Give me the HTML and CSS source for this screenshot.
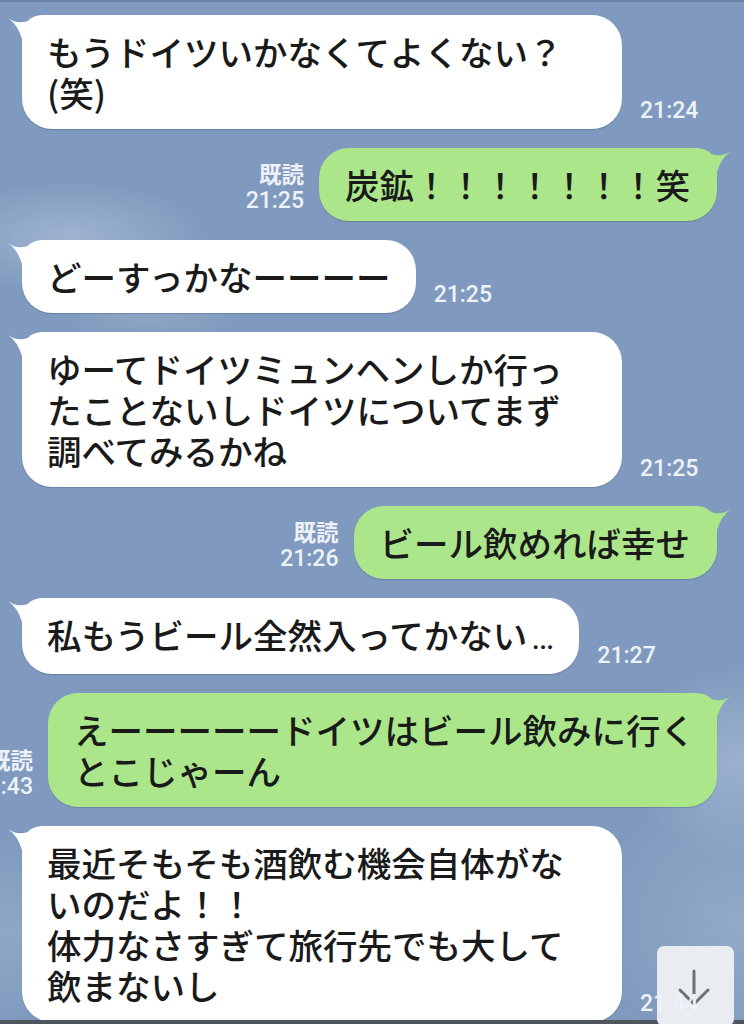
FILE: index.html
```html
<!DOCTYPE html>
<html lang="ja">
<head>
<meta charset="utf-8">
<title>LINE</title>
<link rel="stylesheet" href="styles.css">
</head>
<body>
<div class="screen">
  <div class="chat">
    <div class="row in">
      <div class="bubble white full">もうドイツいかなくてよくない？<br>(笑)<svg class="tail" viewBox="-14 0 28 24"><path d="M-14 3Q-2 12 14 2L14 24L0 24Q-4 10-14 3Z"/></svg></div>
      <span class="time">21:24</span>
    </div>
    <div class="row out">
      <div class="meta"><span class="read">既読</span><span class="time">21:25</span></div>
      <div class="bubble green">炭鉱！！！！！！！笑<svg class="tail" viewBox="-14 0 28 24"><path d="M-14 3Q-2 12 14 2L14 24L0 24Q-4 10-14 3Z"/></svg></div>
    </div>
    <div class="row in">
      <div class="bubble white">どーすっかなーーーー<svg class="tail" viewBox="-14 0 28 24"><path d="M-14 3Q-2 12 14 2L14 24L0 24Q-4 10-14 3Z"/></svg></div>
      <span class="time">21:25</span>
    </div>
    <div class="row in">
      <div class="bubble white full">ゆーてドイツミュンヘンしか行っ<br>たことないしドイツについてまず<br>調べてみるかね<svg class="tail" viewBox="-14 0 28 24"><path d="M-14 3Q-2 12 14 2L14 24L0 24Q-4 10-14 3Z"/></svg></div>
      <span class="time">21:25</span>
    </div>
    <div class="row out">
      <div class="meta"><span class="read">既読</span><span class="time">21:26</span></div>
      <div class="bubble green">ビール飲めれば幸せ<svg class="tail" viewBox="-14 0 28 24"><path d="M-14 3Q-2 12 14 2L14 24L0 24Q-4 10-14 3Z"/></svg></div>
    </div>
    <div class="row in">
      <div class="bubble white">私もうビール全然入ってかない<span class="ell">…</span><svg class="tail" viewBox="-14 0 28 24"><path d="M-14 3Q-2 12 14 2L14 24L0 24Q-4 10-14 3Z"/></svg></div>
      <span class="time">21:27</span>
    </div>
    <div class="row out">
      <div class="meta"><span class="read">既読</span><span class="time">21:43</span></div>
      <div class="bubble green wide">えーーーーードイツはビール飲みに行く<br>とこじゃーん<svg class="tail" viewBox="-14 0 28 24"><path d="M-14 3Q-2 12 14 2L14 24L0 24Q-4 10-14 3Z"/></svg></div>
    </div>
    <div class="row in">
      <div class="bubble white full">最近そもそも酒飲む機会自体がな<br>いのだよ！！<br>体力なさすぎて旅行先でも大して<br>飲まないし<svg class="tail" viewBox="-14 0 28 24"><path d="M-14 3Q-2 12 14 2L14 24L0 24Q-4 10-14 3Z"/></svg></div>
      <span class="time top">21:44</span>
    </div>
  </div>
  <div class="scroll-btn">
    <svg viewBox="0 0 77 80" width="77" height="80"><path d="M37 25V58M23 44L37 58L51 44" fill="none" stroke="#6e7076" stroke-width="3" stroke-linecap="round" stroke-linejoin="round"/></svg>
  </div>
</div>
</body>
</html>
```
FILE: styles.css
```css
html, body {
  margin: 0;
  padding: 0;
}
body {
  width: 744px;
  height: 1024px;
  overflow: hidden;
  font-family: "Noto Sans CJK JP", "Noto Sans", sans-serif;
}
.screen {
  position: relative;
  width: 744px;
  height: 1024px;
  overflow: hidden;
  background:
    radial-gradient(ellipse 200px 80px at 70px 235px, rgba(185, 200, 222, 0.55), rgba(185, 200, 222, 0) 70%),
    radial-gradient(ellipse 140px 70px at 150px 300px, rgba(175, 192, 216, 0.4), rgba(175, 192, 216, 0) 70%),
    radial-gradient(ellipse 160px 140px at 740px 760px, rgba(185, 200, 222, 0.5), rgba(185, 200, 222, 0) 70%),
    radial-gradient(ellipse 220px 200px at 744px 920px, rgba(170, 188, 214, 0.45), rgba(170, 188, 214, 0) 70%),
    radial-gradient(ellipse 120px 140px at 0px 930px, rgba(170, 188, 214, 0.4), rgba(170, 188, 214, 0) 70%),
    #7f9abe;
  border-top: 2px solid #6a82a4;
  box-sizing: border-box;
}
.screen::after {
  content: "";
  position: absolute;
  left: 0;
  right: 0;
  bottom: 0;
  height: 4px;
  background: #4f555d;
}
.chat {
  display: flex;
  flex-direction: column;
  gap: 19px;
  padding-top: 13px;
}
.row {
  display: flex;
  align-items: flex-end;
}
.row.in {
  padding-left: 22px;
}
.row.out {
  justify-content: flex-end;
  padding-right: 27px;
}
.bubble {
  position: relative;
  flex-shrink: 0;
  box-sizing: border-box;
  font-size: 34.5px;
  font-weight: 500;
  line-height: 41px;
  padding: 16px 25px;
  border-radius: 30px;
  color: #1a1a1a;
  white-space: nowrap;
  box-shadow: 0 1px 1px rgba(40, 55, 80, 0.25);
}
.bubble .ell {
  font-family: Roboto, "Liberation Sans", sans-serif;
  font-weight: 400;
  margin-left: 4px;
}
.bubble.white {
  background: #ffffff;
  border-top-left-radius: 20px;
}
.bubble.green {
  background: #abe68b;
  border-top-right-radius: 20px;
  padding-left: 26px;
  padding-right: 27px;
}
.bubble.full {
  width: 600px;
}
.bubble.wide {
  width: 669px;
}
.tail {
  position: absolute;
  top: 0;
  width: 28px;
  height: 24px;
}
.white .tail {
  left: -14px;
  fill: #ffffff;
}
.green .tail {
  right: -14px;
  fill: #abe68b;
  transform: scaleX(-1);
}
.time {
  font-family: Roboto, "Liberation Sans", sans-serif;
  font-weight: 500;
  font-size: 23px;
  line-height: 23px;
  color: #eef2f8;
}
.in .time {
  margin-left: 18px;
  margin-bottom: 7px;
}
.time.top {
  position: relative;
  z-index: 2;
}
.meta {
  flex-shrink: 0;
  display: flex;
  flex-direction: column;
  align-items: flex-end;
  margin-right: 15px;
  margin-bottom: 6px;
  color: #eef2f8;
}
.meta .read {
  font-size: 22.5px;
  font-weight: 700;
  line-height: 28px;
}
.meta .time {
  line-height: 28px;
}
.scroll-btn {
  position: absolute;
  left: 657px;
  top: 944px;
  width: 77px;
  height: 80px;
  border-radius: 7px;
  background: #e9ecf1;
  z-index: 1;
}
.scroll-btn svg {
  display: block;
}
```
